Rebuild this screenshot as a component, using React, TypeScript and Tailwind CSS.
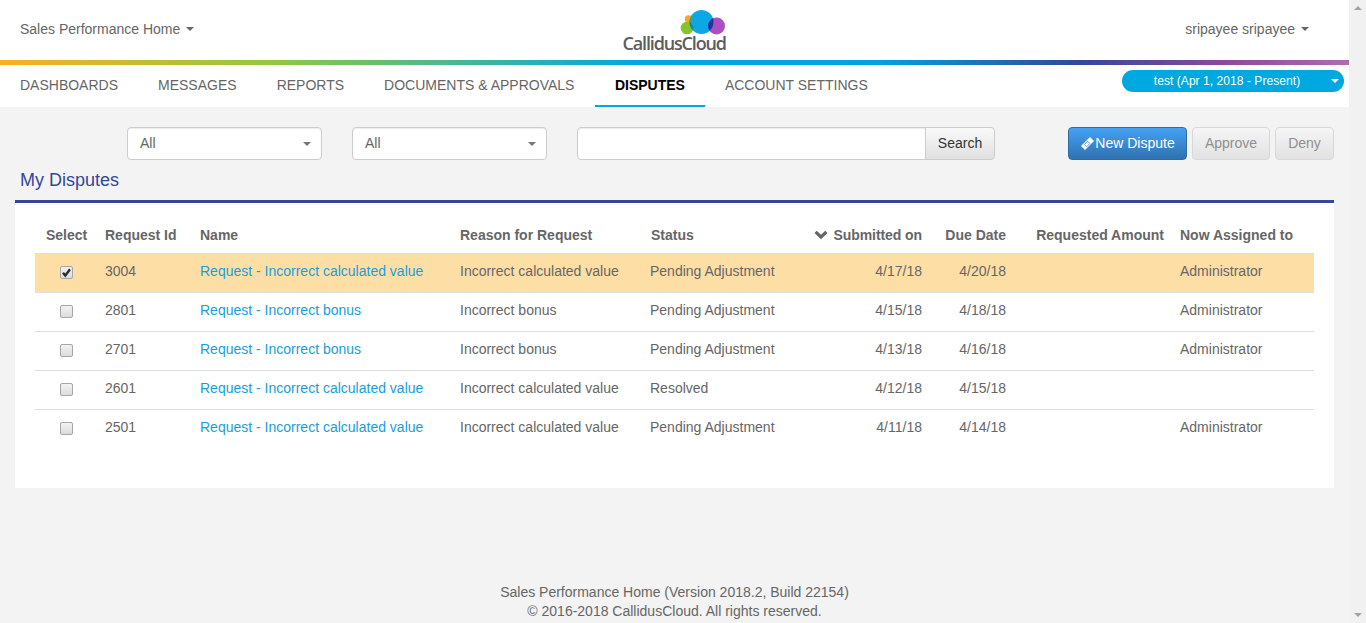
import React from "react";

const rows = [
  { id: "3004", name: "Request - Incorrect calculated value", reason: "Incorrect calculated value", status: "Pending Adjustment", sub: "4/17/18", due: "4/20/18", who: "Administrator", on: true },
  { id: "2801", name: "Request - Incorrect bonus", reason: "Incorrect bonus", status: "Pending Adjustment", sub: "4/15/18", due: "4/18/18", who: "Administrator", on: false },
  { id: "2701", name: "Request - Incorrect bonus", reason: "Incorrect bonus", status: "Pending Adjustment", sub: "4/13/18", due: "4/16/18", who: "Administrator", on: false },
  { id: "2601", name: "Request - Incorrect calculated value", reason: "Incorrect calculated value", status: "Resolved", sub: "4/12/18", due: "4/15/18", who: "", on: false },
  { id: "2501", name: "Request - Incorrect calculated value", reason: "Incorrect calculated value", status: "Pending Adjustment", sub: "4/11/18", due: "4/14/18", who: "Administrator", on: false },
];

const navItems = ["DASHBOARDS", "MESSAGES", "REPORTS", "DOCUMENTS & APPROVALS", "DISPUTES", "ACCOUNT SETTINGS"];

function Caret({ className }: { className: string }) {
  return <span className={"inline-block h-0 w-0 border-x-4 border-t-4 border-x-transparent " + className} />;
}

function Logo() {
  return (
    <div className="flex w-[104px] flex-col items-end self-start pt-[8px]">
      <svg width="48" height="28" viewBox="0 0 48 28">
        <defs>
          <clipPath id="logo-blue">
            <circle cx="22.5" cy="14" r="12" />
          </clipPath>
        </defs>
        <circle cx="9.5" cy="11" r="3.8" fill="#f7a823" />
        <circle cx="8" cy="20" r="6.3" fill="#86c32b" />
        <circle cx="37.5" cy="18" r="8.5" fill="#aa50c0" />
        <circle cx="22.5" cy="14" r="12" fill="#0ea7e6" />
        <circle cx="9.5" cy="11" r="3.8" fill="#5c9a55" clipPath="url(#logo-blue)" />
        <circle cx="8" cy="20" r="6.3" fill="#1b8a7a" clipPath="url(#logo-blue)" />
        <circle cx="37.5" cy="18" r="8.5" fill="#2a2f9e" clipPath="url(#logo-blue)" />
      </svg>
      <span className="-mt-[3px] self-start text-[18px] leading-[20px] font-semibold tracking-[-1.15px] whitespace-nowrap text-[#5b5c5e] [font-family:'Open_Sans',sans-serif]">
        CallidusCloud
      </span>
    </div>
  );
}

function Select() {
  return (
    <div className="flex h-[33px] w-[195px] items-center justify-between rounded-[4px] border border-[#cccccc] bg-white pr-[10px] pl-[12px] text-[#666666] shadow-[inset_0_1px_1px_rgba(0,0,0,0.075)]">
      <span>All</span>
      <Caret className="border-t-[#777777]" />
    </div>
  );
}

function Check({ on }: { on: boolean }) {
  return (
    <span className="relative inline-flex h-[13px] w-[13px] align-middle">
      <input
        type="checkbox"
        readOnly
        checked={on}
        className="h-[13px] w-[13px] appearance-none rounded-[2px] border border-[#a6a6a6] bg-gradient-to-b from-[#f2f2f2] to-[#dcdcdc]"
      />
      {on && (
        <svg viewBox="0 0 13 13" className="pointer-events-none absolute inset-0 h-[13px] w-[13px]">
          <path d="M3 6.8 5.3 9.6 10 3.2" fill="none" stroke="#2a2a2a" strokeWidth="2.4" />
        </svg>
      )}
    </span>
  );
}

export default function App() {
  return (
    <div className="flex h-[623px] w-[1366px] overflow-hidden bg-[#f3f3f3] text-[14px] text-[#666666] [font-family:'Liberation_Sans',Arial,sans-serif]">
      <div className="flex h-full w-[1349px] flex-col">
        <header className="grid h-[60px] grid-cols-[1fr_auto_1fr] items-center bg-white">
          <div className="flex items-center gap-[6px] pb-[2px] pl-[20px]">
            <span>Sales Performance Home</span>
            <Caret className="border-t-[#666666]" />
          </div>
          <Logo />
          <div className="flex items-center justify-end gap-[6px] pr-[40px] pb-[2px]">
            <span>sripayee sripayee</span>
            <Caret className="border-t-[#666666]" />
          </div>
        </header>
        <div className="h-[5px] bg-[linear-gradient(90deg,#fbb01f_0%,#93c83f_20%,#00a8e1_47%,#00a3dd_65%,#34479b_80%,#8e4a9b_91%,#ae6cb1_100%)]" />
        <nav className="flex h-[42px] bg-white">
          {navItems.map((n) => (
            <div
              key={n}
              className={
                n === "DISPUTES"
                  ? "ml-[0.5px] flex h-[42px] w-[110px] items-center justify-center border-b-2 border-[#00a8e1] font-bold text-black"
                  : "flex h-[42px] items-center px-[20px] pb-[2px] text-[#666666]"
              }
            >
              {n}
            </div>
          ))}
          <div className="mt-[5px] mr-[5px] ml-auto flex h-[22px] w-[222px] items-center rounded-[11px] bg-[#00a8e1] pr-[5px] text-[12px] tracking-[0.06px] text-white">
            <span className="flex-1 pl-[1px] text-center">test (Apr 1, 2018 - Present)</span>
            <Caret className="border-t-white" />
          </div>
        </nav>

        <main className="flex-1 px-[15px]">
          <div className="mt-[20px] flex items-start">
            <div className="ml-[112px]"><Select /></div>
            <div className="ml-[30px]"><Select /></div>
            <div className="ml-[30px] flex h-[33px]">
              <div className="h-[33px] w-[349px] rounded-l-[4px] border border-[#cccccc] bg-white shadow-[inset_0_1px_1px_rgba(0,0,0,0.075)]" />
              <button className="-ml-px flex h-[33px] w-[70px] items-center justify-center rounded-r-[4px] border border-[#cccccc] bg-gradient-to-b from-[#fafafa] to-[#e0e0e0] text-[#333333]">
                Search
              </button>
            </div>
            <button className="ml-[73px] flex h-[33px] w-[119px] items-center justify-center rounded-[4px] border border-[#2e6da4] bg-gradient-to-b from-[#45a2f5] to-[#2f72b0] text-white">
              <svg width="15" height="15" viewBox="0 0 15 15" className="shrink-0">
                <path d="M10 1 14 5 5 14 1 10z" fill="#ffffff" />
                <path d="M7.6 5.2 9.9 7.5 6.6 10.8 4.3 8.5z" fill="none" stroke="#5aa0de" strokeWidth="1" />
              </svg>
              <span>New Dispute</span>
            </button>
            <button className="ml-[5px] flex h-[33px] w-[78px] items-center justify-center rounded-[4px] border border-[#d8d8d8] bg-gradient-to-b from-[#f5f5f5] to-[#e2e2e2] text-[#8f8f8f]">
              Approve
            </button>
            <button className="ml-[5px] flex h-[33px] w-[59px] items-center justify-center rounded-[4px] border border-[#d8d8d8] bg-gradient-to-b from-[#f5f5f5] to-[#e2e2e2] text-[#8f8f8f]">
              Deny
            </button>
          </div>

          <h2 className="mt-[9px] pl-[5px] text-[18px] leading-[22px] font-normal text-[#34479b]">My Disputes</h2>
          <div className="mt-[9px] h-[288px] border-t-[3px] border-[#34479b] bg-white px-[20px] pt-[15px]">
            <table className="w-[1279px] table-fixed border-collapse text-[14px]">
              <thead>
                <tr className="h-[35px] font-bold">
                  <th className="w-[62px] pl-[1px] text-center font-bold">Select</th>
                  <th className="w-[95px] pl-[8px] text-left font-bold">Request Id</th>
                  <th className="w-[260px] pl-[8px] text-left font-bold">Name</th>
                  <th className="w-[190px] pl-[8px] text-left font-bold">Reason for Request</th>
                  <th className="w-[158px] pl-[9px] text-left font-bold">Status</th>
                  <th className="w-[130px] pr-[8px] text-right font-bold">
                    <span className="inline-flex items-center gap-[6px] whitespace-nowrap">
                      <svg width="14" height="10" viewBox="0 0 14 10">
                        <path d="M1.6 1.8 7 7 12.4 1.8" fill="none" stroke="#666666" strokeWidth="3.2" />
                      </svg>
                      <span className="tracking-[-0.08px]">Submitted on</span>
                    </span>
                  </th>
                  <th className="w-[84px] pr-[8px] text-right font-bold">Due Date</th>
                  <th className="w-[158px] pr-[8px] text-right font-bold">Requested Amount</th>
                  <th className="w-[142px] pl-[8px] text-left font-bold">Now Assigned to</th>
                </tr>
              </thead>
              <tbody>
                {rows.map((r) => (
                  <tr key={r.id} className={(r.on ? "bg-[#fddfa6] " : "") + "h-[39px] border-t border-[#dddddd]"}>
                    <td className="pb-[2px] text-center"><Check on={r.on} /></td>
                    <td className="pb-[2px] pl-[8px]">{r.id}</td>
                    <td className="pb-[2px] pl-[8px] whitespace-nowrap text-[#1a9ddb]">{r.name}</td>
                    <td className="pb-[2px] pl-[8px] whitespace-nowrap">{r.reason}</td>
                    <td className="pb-[2px] pl-[8px] whitespace-nowrap">{r.status}</td>
                    <td className="pr-[8px] pb-[2px] text-right">{r.sub}</td>
                    <td className="pr-[8px] pb-[2px] text-right">{r.due}</td>
                    <td className="pr-[8px] pb-[2px] text-right"></td>
                    <td className="pb-[2px] pl-[8px]">{r.who}</td>
                  </tr>
                ))}
              </tbody>
            </table>
          </div>
        </main>

        <footer className="pb-[2px] text-center leading-[19px]">
          <div>Sales Performance Home (Version 2018.2, Build 22154)</div>
          <div>© 2016-2018 CallidusCloud. All rights reserved.</div>
        </footer>
      </div>
      <div className="flex w-[17px] flex-col items-center justify-between bg-[#f1f1f1] py-[6px]">
        <span className="h-0 w-0 border-x-[4px] border-b-[4px] border-x-transparent border-b-[#a3a3a3]" />
        <span className="h-0 w-0 border-x-[4px] border-t-[4px] border-x-transparent border-t-[#a3a3a3]" />
      </div>
    </div>
  );
}
